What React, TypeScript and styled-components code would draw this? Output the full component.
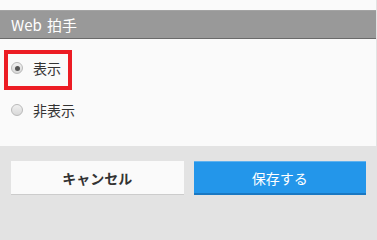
import styled, { createGlobalStyle } from "styled-components";

const GlobalStyle = createGlobalStyle`
  html, body {
    margin: 0;
    padding: 0;
    background: #e3e3e3;
  }
  body {
    font-family: "Noto Sans CJK JP", "Noto Sans", sans-serif;
    -webkit-font-smoothing: antialiased;
  }
`;

const Screen = styled.div`
  width: 377px;
  height: 204px;
  display: flex;
  flex-direction: column;
  background: #e3e3e3;
`;

const Panel = styled.section`
  width: 376px;
  padding-top: 10px;
  background: #fafafa;
`;

const PanelTitle = styled.h2`
  margin: 0;
  height: 29px;
  padding-left: 11px;
  display: flex;
  align-items: center;
  box-sizing: border-box;
  background: #999999;
  border-top: 1px solid #a3a3a3;
  border-bottom: 1px solid #6a6a6a;
  color: #ffffff;
  font-size: 15px;
  font-weight: 400;
  word-spacing: 2px;
`;

const OptionList = styled.div`
  display: flex;
  flex-direction: column;
  padding: 8px 0 15px;
`;

const Option = styled.label<{ $highlighted?: boolean }>`
  position: relative;
  height: 42px;
  display: flex;
  align-items: center;
  gap: 10px;
  padding-left: 11px;
  font-size: 14px;
  color: #333333;

  ${({ $highlighted }) =>
    $highlighted &&
    `
    &::after {
      content: "";
      position: absolute;
      left: 4px;
      top: 3px;
      width: 60px;
      height: 32px;
      border: 4px solid #ec1c24;
    }
  `}
`;

const Radio = styled.span<{ $checked?: boolean }>`
  width: 12px;
  height: 12px;
  border-radius: 50%;
  box-sizing: border-box;
  border: 1px solid #b9b9b9;
  background: linear-gradient(#f0f0f0, #d8d8d8);
  display: flex;
  align-items: center;
  justify-content: center;

  &::before {
    content: "";
    width: 5px;
    height: 5px;
    border-radius: 50%;
    background: ${({ $checked }) => ($checked ? "#555555" : "transparent")};
  }
`;

const Footer = styled.div`
  display: flex;
  gap: 10px;
  padding: 15px 11px 9px;
`;

const Button = styled.button<{ $primary?: boolean }>`
  flex: 1;
  height: 34px;
  border: none;
  box-sizing: border-box;
  font-family: "Noto Sans CJK JP", "Noto Sans", sans-serif;
  font-size: 14px;
  cursor: pointer;
  background: ${({ $primary }) => ($primary ? "#2396ea" : "#fafafa")};
  color: ${({ $primary }) => ($primary ? "#ffffff" : "#333333")};
  font-weight: ${({ $primary }) => ($primary ? 400 : 700)};
  border-top: 1px solid ${({ $primary }) => ($primary ? "#5fb2ef" : "#fafafa")};
  border-bottom: ${({ $primary }) =>
    $primary ? "2px solid #1a78c2" : "1px solid #cccccc"};
`;

export default function App() {
  return (
    <>
      <GlobalStyle />
      <Screen>
        <Panel>
          <PanelTitle>Web 拍手</PanelTitle>
          <OptionList>
            <Option $highlighted>
              <Radio $checked />
              表示
            </Option>
            <Option>
              <Radio />
              非表示
            </Option>
          </OptionList>
        </Panel>
        <Footer>
          <Button>キャンセル</Button>
          <Button $primary>保存する</Button>
        </Footer>
      </Screen>
    </>
  );
}
